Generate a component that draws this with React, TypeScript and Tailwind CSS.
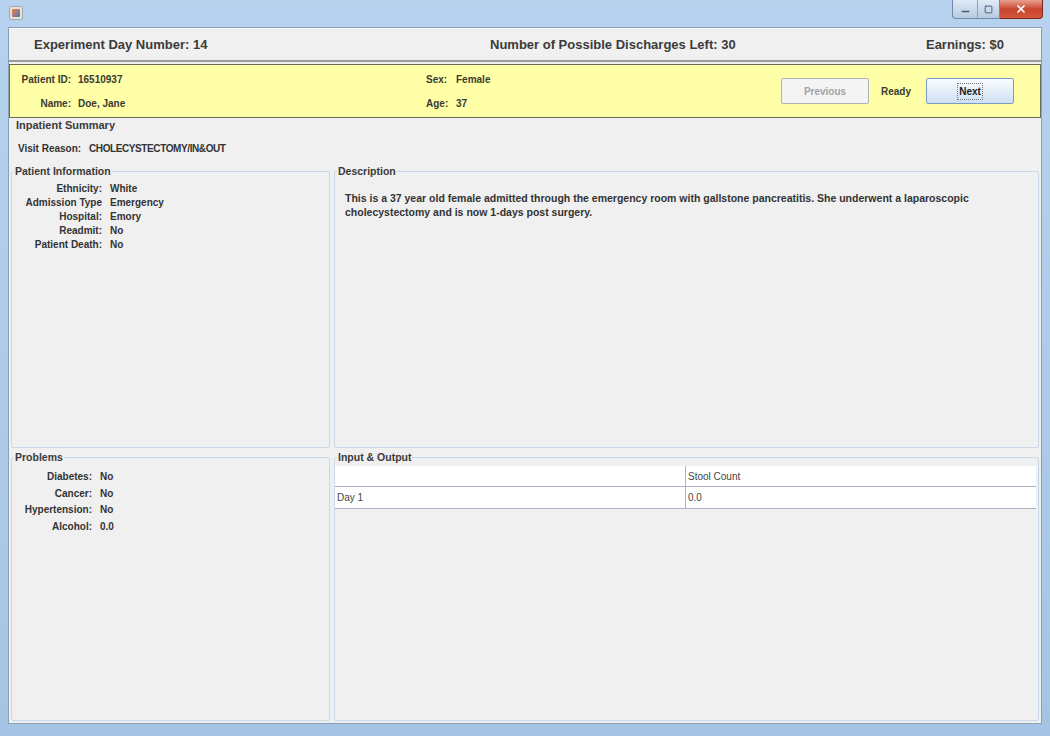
import { Minus, Square, X } from 'lucide-react';

const font = { fontFamily: '"Liberation Sans", Arial, sans-serif' };

const patientInfo = [
  ['Ethnicity:', 'White'],
  ['Admission Type', 'Emergency'],
  ['Hospital:', 'Emory'],
  ['Readmit:', 'No'],
  ['Patient Death:', 'No'],
];

const problems = [
  ['Diabetes:', 'No'],
  ['Cancer:', 'No'],
  ['Hypertension:', 'No'],
  ['Alcohol:', '0.0'],
];

function Group({ title, className, children }: { title: string; className?: string; children?: React.ReactNode }) {
  return (
    <fieldset className={`border border-[#cbd9e7] rounded-[2px] px-0 pb-0 min-w-0 ${className ?? ''}`}>
      <legend className="ml-[2px] px-[1px] text-[10.5px] font-bold text-[#3a3a3a] leading-[12px]">{title}</legend>
      {children}
    </fieldset>
  );
}

export default function App() {
  return (
    <div style={font} className="w-[1050px] h-[736px] overflow-hidden bg-gradient-to-b from-[#b7d2ee] to-[#a5c4e4] flex flex-col">
      {/* title bar */}
      <div className="h-[27px] flex items-start relative shrink-0">
        <div className="ml-[9px] mt-[6px] w-[14px] h-[14px] rounded-[2px] bg-[#e9e2d8] border border-[#9aa] flex items-center justify-center">
          <div className="w-[8px] h-[8px] bg-gradient-to-br from-[#f07a2a] to-[#3c6fb8] rounded-[1px]" />
        </div>
        <div className="ml-auto mr-[7px] flex h-[19px]">
          <div className="flex rounded-bl-[4px] border border-t-0 border-[#6f8aa8] bg-gradient-to-b from-[#dfeaf6] to-[#b5cbe2]">
            <div className="w-[25px] flex items-center justify-center border-r border-[#8aa4c0]">
              <Minus size={11} strokeWidth={3} className="text-[#4a5a70] mt-[4px]" />
            </div>
            <div className="w-[21px] flex items-center justify-center">
              <Square size={9} strokeWidth={2.5} className="text-[#4a5a70]" />
            </div>
          </div>
          <div className="w-[43px] flex items-center justify-center rounded-br-[4px] border border-t-0 border-l-0 border-[#7a2a20] bg-gradient-to-b from-[#e6a08e] via-[#c9452e] to-[#d3573b]">
            <X size={12} strokeWidth={3.5} className="text-white" />
          </div>
        </div>
      </div>

      {/* window content */}
      <div className="mx-[8px] h-[697px] bg-[#f0f0f0] border border-[#8aa0b8] flex flex-col text-[#333]">
        {/* header */}
        <div className="h-[34px] shrink-0 flex items-center border-b-2 border-[#9a9a9a] border-t border-t-white text-[13px] font-bold text-[#3b3b3b]">
          <span className="pl-[25px] w-[481px]">Experiment Day Number: 14</span>
          <span>Number of Possible Discharges Left: 30</span>
          <span className="ml-auto pr-[37px]">Earnings: $0</span>
        </div>

        {/* patient bar */}
        <div className="mt-[2px] h-[54px] shrink-0 bg-[#ffffa8] border border-[#6b6b5a] flex items-center text-[10px] font-bold text-[#3a3a30]">
          <div className="flex flex-col gap-[9px] pl-[9px] w-[416px]">
            <div className="flex"><span className="w-[52px] text-right">Patient ID:</span><span className="ml-[7px]">16510937</span></div>
            <div className="flex"><span className="w-[52px] text-right">Name:</span><span className="ml-[7px]">Doe, Jane</span></div>
          </div>
          <div className="flex flex-col gap-[9px]">
            <div className="flex"><span className="w-[30px]">Sex:</span><span>Female</span></div>
            <div className="flex"><span className="w-[30px]">Age:</span><span>37</span></div>
          </div>
          <div className="ml-auto mr-[26px] flex items-center">
            <div className="w-[88px] h-[26px] flex items-center justify-center border border-[#adb2b5] bg-[#f4f4f4] rounded-[2px] text-[#a3a3a3]">Previous</div>
            <span className="ml-[12px] w-[45px]">Ready</span>
            <div className="w-[88px] h-[26px] flex items-center justify-center border border-[#7b9cc2] rounded-[2px] bg-gradient-to-b from-[#fafcfe] to-[#cfe0f3] text-[#222]">
              <span className="px-[1px] border border-dotted border-[#777]">Next</span>
            </div>
          </div>
        </div>

        <div className="pl-[7px] text-[11px] font-bold text-[#3a3a3a] leading-[14px]">Inpatient Summary</div>
        <div className="pl-[9px] mt-[11px] flex items-center leading-[12px]">
          <span className="text-[10px] font-bold w-[71px]">Visit Reason:</span>
          <span className="text-[10px] font-bold tracking-[-0.4px]">CHOLECYSTECTOMY/IN&amp;OUT</span>
        </div>

        <div className="flex-1 mt-[10px] px-[2px] pb-[2px] grid grid-cols-[319px_1fr] grid-rows-[283px_1fr] gap-x-[4px] gap-y-[3px]">
          <Group title="Patient Information">
            <div className="mt-[5px] text-[10px] font-bold leading-[14px]">
              {patientInfo.map(([k, v]) => (
                <div key={k} className="flex">
                  <span className="w-[90px] text-right">{k}</span>
                  <span className="ml-[8px]">{v}</span>
                </div>
              ))}
            </div>
          </Group>
          <Group title="Description">
            <p className="mt-[14px] pl-[10px] text-[10.5px] font-bold leading-[14px]">
              This is a 37 year old female admitted through the emergency room with gallstone pancreatitis. She underwent a laparoscopic
              <br />
              cholecystectomy and is now 1-days post surgery.
            </p>
          </Group>
          <Group title="Problems">
            <div className="mt-[6px] text-[10px] font-bold leading-[16.7px]">
              {problems.map(([k, v]) => (
                <div key={k} className="flex">
                  <span className="w-[80px] text-right">{k}</span>
                  <span className="ml-[8px]">{v}</span>
                </div>
              ))}
            </div>
          </Group>
          <Group title="Input & Output">
            <div className="mt-[3px] mr-[2px] bg-white border-b border-[#a8b4c2] text-[10px] text-[#444]">
              <div className="flex h-[21px] border-b border-[#a8b4c2]">
                <div className="w-[351px] border-r border-[#a8b4c2]" />
                <div className="pl-[2px] flex items-center">Stool Count</div>
              </div>
              <div className="flex h-[21px]">
                <div className="w-[351px] pl-[2px] flex items-center border-r border-[#a8b4c2]">Day 1</div>
                <div className="pl-[2px] flex items-center">0.0</div>
              </div>
            </div>
          </Group>
        </div>
      </div>
    </div>
  );
}
